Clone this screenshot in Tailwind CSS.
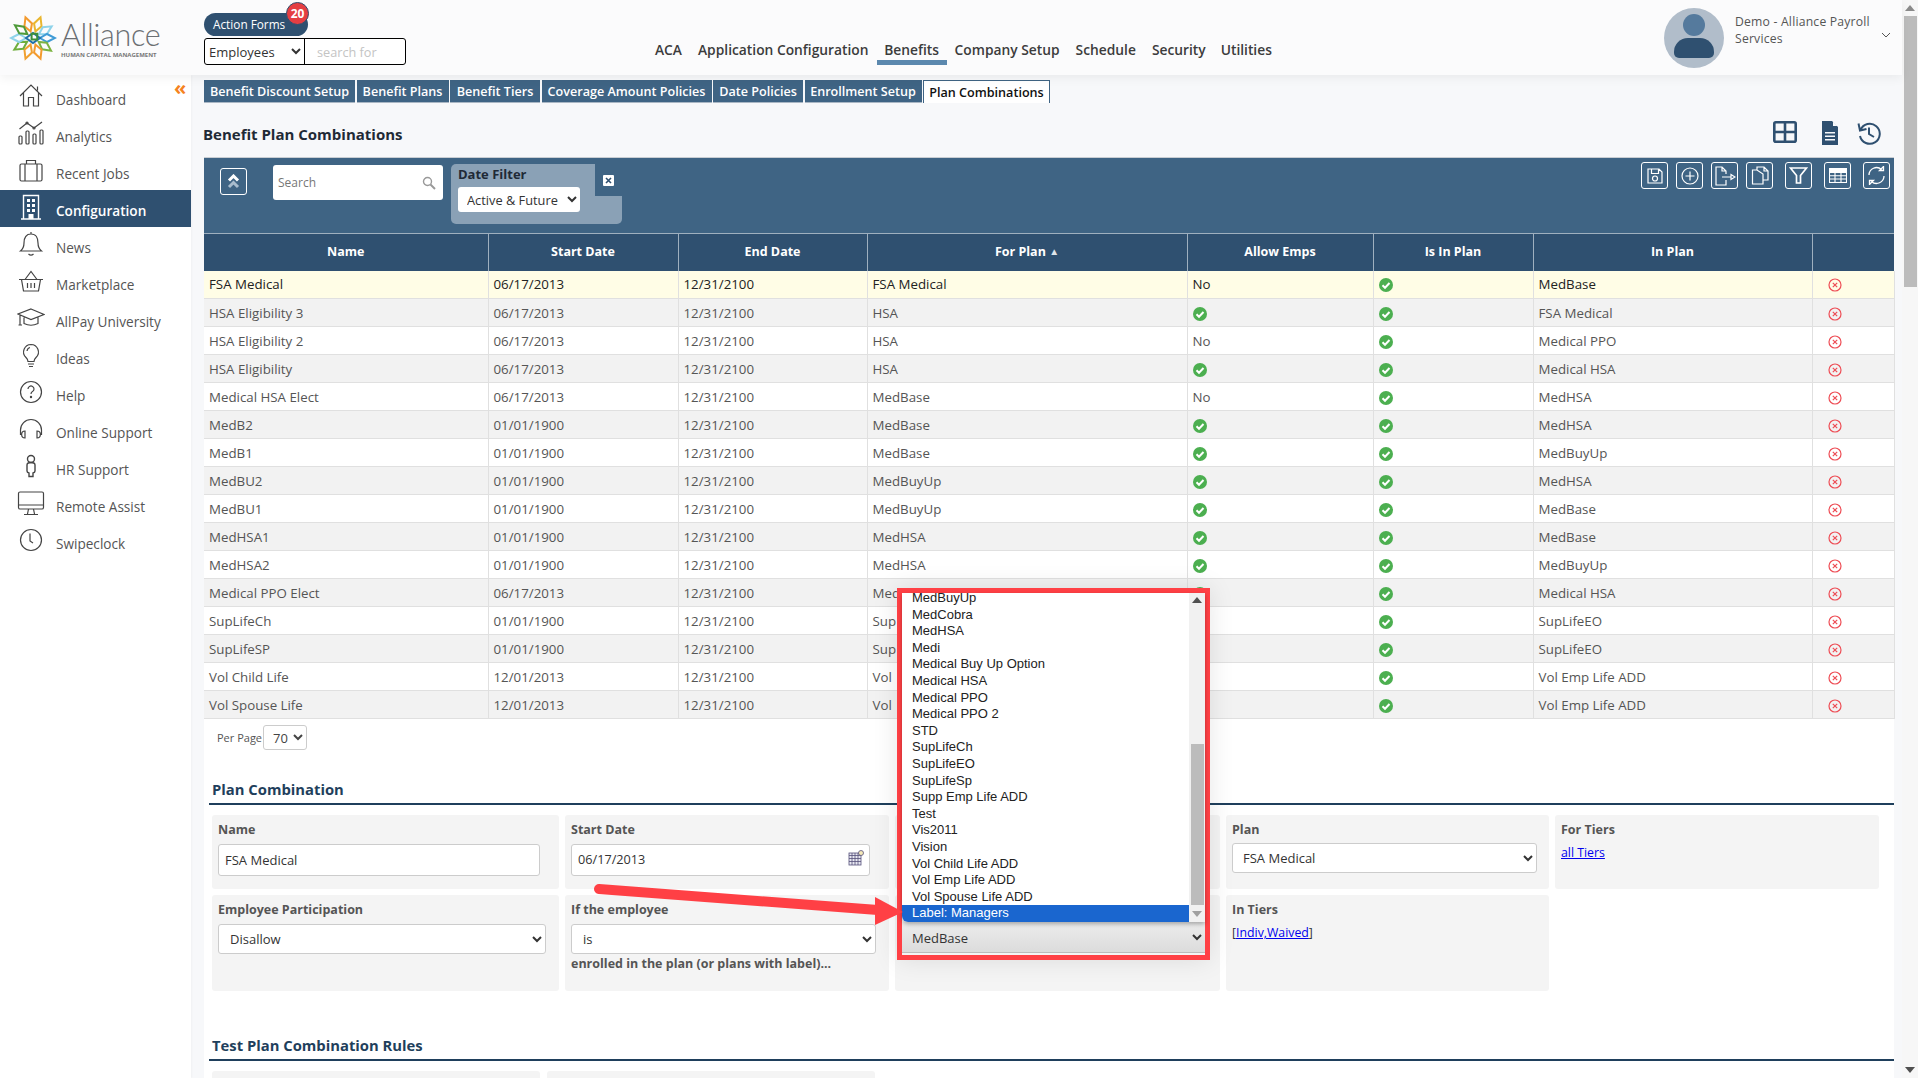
<!DOCTYPE html>
<html lang="en">
<head>
    <meta charset="UTF-8">
    <title>Benefit Plan Combinations</title>
    <script src="https://cdn.jsdelivr.net/npm/@tailwindcss/browser@4"></script>
</head>
<body class="bg-[#f7f8fa] overflow-hidden font-['Open_Sans',sans-serif]">
<div class="relative flex w-[1918px] h-[1078px] overflow-hidden">
    <div class="w-[1902px] flex flex-col">
        <!-- Header -->
        <header class="relative z-10 h-[75px] shrink-0 flex bg-[#fbfbfc] shadow-[0_3px_10px_rgba(0,0,0,0.06)]">
            <div class="w-[204px] shrink-0 flex items-center pl-[9px]">
                <svg class="w-[48px] h-[46px] shrink-0" viewBox="0 0 48 46" fill="none" stroke-width="2">
                    <g transform="translate(24 23)">
                        <polygon points="0,-7 4,-14 0,-22 -4,-14" stroke="#f39a2e" transform="rotate(-20)"/>
                        <polygon points="0,-7 4,-14 0,-22 -4,-14" stroke="#e9b62f" transform="rotate(20)"/>
                        <polygon points="0,-7 4,-14 0,-22 -4,-14" stroke="#8fd3ea" transform="rotate(58)"/>
                        <polygon points="0,-7 4,-14 0,-22 -4,-14" stroke="#3f9bd6" transform="rotate(90)"/>
                        <polygon points="0,-7 4,-14 0,-22 -4,-14" stroke="#7cb342" transform="rotate(125)"/>
                        <polygon points="0,-7 4,-14 0,-22 -4,-14" stroke="#f39a2e" transform="rotate(160)"/>
                        <polygon points="0,-7 4,-14 0,-22 -4,-14" stroke="#f0a030" transform="rotate(200)"/>
                        <polygon points="0,-7 4,-14 0,-22 -4,-14" stroke="#6fae3c" transform="rotate(238)"/>
                        <polygon points="0,-7 4,-14 0,-22 -4,-14" stroke="#8fd3ea" transform="rotate(270)"/>
                        <polygon points="0,-7 4,-14 0,-22 -4,-14" stroke="#4f9a3a" transform="rotate(305)"/>
                        <polygon points="-7,0 0,-5 7,0 0,5" stroke="#1f6fa8"/>
                        <polygon points="0,-6 4,-2 0,2 -4,-2" stroke="#3d8f3a" transform="rotate(45)"/>
                    </g>
                </svg>
                <div class="ml-[4px] w-[100px] mt-[2px]">
                    <div class="text-[30.5px] leading-[34px] font-light text-[#6b6f73] font-['Lato','Open_Sans',sans-serif] tracking-[-0.3px]">Alliance</div>
                    <div class="text-[6px] leading-[9px] font-bold text-[#777] whitespace-nowrap">HUMAN CAPITAL MANAGEMENT</div>
                </div>
            </div>
            <div class="w-[300px] shrink-0 pt-[13px] relative">
                <div class="relative w-[104px] h-[23px] rounded-full bg-[#2f5070] text-white text-[11.8px] leading-[23px] pl-[9px]">
                    Action Forms
                    <span class="absolute left-[82px] -top-[11px] w-[23px] h-[23px] rounded-full bg-[#e53e42] border border-[#2f5070] text-white text-[12px] font-bold leading-[21px] text-center">20</span>
                </div>
                <div class="mt-[2px] flex w-[202px] h-[27px] border border-black rounded-[3px] bg-white">
                    <select class="w-[100px] h-full text-[13px] text-[#333] border-r border-black"><option>Employees</option></select>
                    <input class="w-[100px] h-full text-[12.7px] pl-[12px] placeholder:text-[#c4c4c4]" placeholder="search for">
                </div>
            </div>
            <nav class="h-full flex items-start pt-[40px] pl-[151px] text-[13.8px] font-semibold text-[#3c3c3c] whitespace-nowrap">
                <span class="mr-[16px]">ACA</span>
                <span class="mr-[8px]">Application Configuration</span>
                <span class="w-[70px] h-[25px] mr-[8px] border-b-[5px] border-[#5b88ae] text-center">Benefits</span>
                <span class="mr-[16px]">Company Setup</span>
                <span class="mr-[16px]">Schedule</span>
                <span class="mr-[15px]">Security</span>
                <span>Utilities</span>
            </nav>
            <div class="ml-auto flex items-center pr-[11px]">
                <div class="relative w-[60px] h-[60px] rounded-full bg-[#b1bdca] overflow-hidden">
                    <div class="absolute left-[19px] top-[6px] w-[22px] h-[22px] rounded-full bg-[#557a9d]"></div>
                    <div class="absolute left-[10px] top-[30px] w-[40px] h-[20px] rounded-t-[14px] rounded-b-[5px] bg-[#2f5070]"></div>
                </div>
                <div class="ml-[11px] w-[140px] -mt-[16px] text-[12.2px] leading-[17px] text-[#555] tracking-[0.2px]">Demo - Alliance Payroll Services</div>
                <svg class="w-[10px] h-[6px] ml-[6px] -mt-[6px] text-[#555]" viewBox="0 0 10 6" fill="none" stroke="currentColor"><path d="M1 1l4 4 4-4"/></svg>
            </div>
        </header>

        <div class="flex flex-1 min-h-0">
            <!-- Sidebar -->
            <aside class="relative w-[191px] shrink-0 bg-white pt-[4px] text-[13.6px] text-[#555] shadow-[1px_0_2px_rgba(0,0,0,0.03)]">
                <span class="absolute left-[174px] top-[4px] text-[#f58220] text-[20px] leading-[18px] font-bold">«</span>
                <a class="h-[37px] flex items-center">
                    <svg class="w-[28px] h-[28px] ml-[17px] mr-[11px] -mt-[3px] text-[#444]" viewBox="0 0 28 28" fill="none" stroke="currentColor" stroke-width="1.2"><path d="M3 14L14 3l11 11M6.500 11v13H11.500V15.500h5V24H21.500V11M20.500 4.500v4"/></svg>
                    <span class="pt-[5px]">Dashboard</span>
                </a>
                <a class="h-[37px] flex items-center">
                    <svg class="w-[28px] h-[28px] ml-[17px] mr-[11px] -mt-[3px] text-[#444]" viewBox="0 0 28 28" fill="none" stroke="currentColor" stroke-width="1.2"><rect x="2" y="17" width="3" height="8" rx="1"/><rect x="9" y="12" width="3" height="13" rx="1"/><rect x="16" y="15" width="3" height="10" rx="1"/><rect x="23" y="11" width="3" height="14" rx="1"/><path d="M2.500 10l7.500-6 7 5 8-6"/><circle cx="10" cy="4" r="1"/><circle cx="17" cy="9" r="1"/></svg>
                    <span class="pt-[5px]">Analytics</span>
                </a>
                <a class="h-[37px] flex items-center">
                    <svg class="w-[28px] h-[28px] ml-[17px] mr-[11px] -mt-[3px] text-[#444]" viewBox="0 0 28 28" fill="none" stroke="currentColor" stroke-width="1.2"><rect x="3" y="8" width="22" height="17" rx="1.500"/><path d="M9.500 8V4.500h9V8M8 8v17M20 8v17"/></svg>
                    <span class="pt-[5px]">Recent Jobs</span>
                </a>
                <a class="h-[37px] flex items-center bg-[#2f5070] text-white font-semibold">
                    <svg class="w-[28px] h-[28px] ml-[17px] mr-[11px] -mt-[3px] text-white" viewBox="0 0 28 28" fill="none" stroke="currentColor" stroke-width="1.400"><path d="M4 26h20M6.500 26V2.500h15V26"/><path fill="currentColor" stroke="none" d="M10 6h3v3h-3zM15 6h3v3h-3zM10 11h3v3h-3zM15 11h3v3h-3zM10 16h3v3h-3zM15 16h3v3h-3zM11.500 21h5v5h-5z"/></svg>
                    <span class="pt-[5px]">Configuration</span>
                </a>
                <a class="h-[37px] flex items-center">
                    <svg class="w-[28px] h-[28px] ml-[17px] mr-[11px] -mt-[3px] text-[#444]" viewBox="0 0 28 28" fill="none" stroke="currentColor" stroke-width="1.2"><path d="M14 4c-5 0-7 4-7 9 0 4-1 6-3.500 8h21c-2.500-2-3.500-4-3.500-8 0-5-2-9-7-9zM14 4V2M11.500 24q2.500 2.500 5 0"/></svg>
                    <span class="pt-[5px]">News</span>
                </a>
                <a class="h-[37px] flex items-center">
                    <svg class="w-[28px] h-[28px] ml-[17px] mr-[11px] -mt-[3px] text-[#444]" viewBox="0 0 28 28" fill="none" stroke="currentColor" stroke-width="1.2"><path d="M2 12.500h24M4.500 12.500l2 11.500h15l2-11.500M8 12.500L14 4.500l6 8M10.500 16v5M14 16v5M17.500 16v5"/></svg>
                    <span class="pt-[5px]">Marketplace</span>
                </a>
                <a class="h-[37px] flex items-center">
                    <svg class="w-[28px] h-[28px] ml-[17px] mr-[11px] -mt-[3px] text-[#444]" viewBox="0 0 28 28" fill="none" stroke="currentColor" stroke-width="1.2"><path d="M14 5l13 5.500-13 5-13-5.500zM7 13.500v6q7 3.500 14 0v-6M3 11.500V21M5 21H1.500"/></svg>
                    <span class="pt-[5px]">AllPay University</span>
                </a>
                <a class="h-[37px] flex items-center">
                    <svg class="w-[28px] h-[28px] ml-[17px] mr-[11px] -mt-[3px] text-[#444]" viewBox="0 0 28 28" fill="none" stroke="currentColor" stroke-width="1.2"><path d="M14 3.500a7.500 7.500 0 0 0-5 13c1 1 2 3 2 4h6c0-1 1-3 2-4a7.500 7.500 0 0 0-5-13zM11 23h6M12 25.500h4M10 10q.5-3 3-3.500"/></svg>
                    <span class="pt-[5px]">Ideas</span>
                </a>
                <a class="h-[37px] flex items-center">
                    <svg class="w-[28px] h-[28px] ml-[17px] mr-[11px] -mt-[3px] text-[#444]" viewBox="0 0 28 28" fill="none" stroke="currentColor" stroke-width="1.2"><circle cx="14" cy="14" r="10.500"/><path d="M11 11a3 3 0 1 1 4.500 2.600c-1 .6-1.500 1.200-1.500 2.400"/><circle cx="14" cy="19" r=".6"/></svg>
                    <span class="pt-[5px]">Help</span>
                </a>
                <a class="h-[37px] flex items-center">
                    <svg class="w-[28px] h-[28px] ml-[17px] mr-[11px] -mt-[3px] text-[#444]" viewBox="0 0 28 28" fill="none" stroke="currentColor" stroke-width="1.2"><path d="M3.500 20v-5a10.500 10.500 0 0 1 21 0v5M8 16c-4.500 0-4.500 7 0 7zM20 16c4.500 0 4.500 7 0 7z"/></svg>
                    <span class="pt-[5px]">Online Support</span>
                </a>
                <a class="h-[37px] flex items-center">
                    <svg class="w-[28px] h-[28px] ml-[17px] mr-[11px] -mt-[3px] text-[#444]" viewBox="0 0 28 28" fill="none" stroke="currentColor" stroke-width="1.400"><circle cx="14" cy="7" r="3.500"/><path d="M10 13q0-2.500 4-2.500t4 2.500v6q0 1.500-2 2v3.500h-4V21q-2-.5-2-2z"/></svg>
                    <span class="pt-[5px]">HR Support</span>
                </a>
                <a class="h-[37px] flex items-center">
                    <svg class="w-[28px] h-[28px] ml-[17px] mr-[11px] -mt-[3px] text-[#444]" viewBox="0 0 28 28" fill="none" stroke="currentColor" stroke-width="1.2"><rect x="1.500" y="3" width="25" height="17" rx="1.500"/><path d="M1.500 16h25M11.500 20l-1 5M16.500 20l1 5M7 25.500h14"/></svg>
                    <span class="pt-[5px]">Remote Assist</span>
                </a>
                <a class="h-[37px] flex items-center">
                    <svg class="w-[28px] h-[28px] ml-[17px] mr-[11px] -mt-[3px] text-[#444]" viewBox="0 0 28 28" fill="none" stroke="currentColor" stroke-width="1.2"><circle cx="14" cy="14" r="10.500"/><path d="M13 7.500V15l3 2"/></svg>
                    <span class="pt-[5px]">Swipeclock</span>
                </a>
            </aside>

            <!-- Main -->
            <main class="flex-1 min-w-0 pl-[13px] pr-[8px] flex flex-col">
                <div class="mt-[5px] h-[23px] shrink-0 flex gap-[1.500px] text-[12.6px] font-semibold text-white whitespace-nowrap leading-[23px]">
                    <span class="w-[151px] text-center bg-[#3f6484] border-b border-[#aab7c4]">Benefit Discount Setup</span>
                    <span class="w-[92px] text-center bg-[#3f6484] border-b border-[#aab7c4]">Benefit Plans</span>
                    <span class="w-[90px] text-center bg-[#3f6484] border-b border-[#aab7c4]">Benefit Tiers</span>
                    <span class="w-[170px] text-center bg-[#3f6484] border-b border-[#aab7c4]">Coverage Amount Policies</span>
                    <span class="w-[90px] text-center bg-[#3f6484] border-b border-[#aab7c4]">Date Policies</span>
                    <span class="w-[117px] text-center bg-[#3f6484] border-b border-[#aab7c4]">Enrollment Setup</span>
                    <span class="w-[127px] text-center bg-white text-[#111] border-t border-r border-l border-[#3f6484]">Plan Combinations</span>
                </div>

                <div class="h-[54px] shrink-0 flex items-start">
                    <h1 class="mt-[21px] -ml-[1px] text-[15px] leading-[20px] font-bold text-[#1f2a36]">Benefit Plan Combinations</h1>
                    <div class="ml-auto mt-[18px] flex items-start text-[#2f5070] mr-[13px]">
                        <svg class="w-[24px] h-[22px] mr-[24px]" viewBox="0 0 24 22" fill="none" stroke="currentColor" stroke-width="2.600"><rect x="1.300" y="1.300" width="21.400" height="19.400" rx="1.500"/><path d="M12 1v20M1 11h22"/></svg>
                        <svg class="w-[18px] h-[24px] mr-[18px]" viewBox="0 0 18 24"><path fill="currentColor" d="M1 0h10l6 6v18H1z"/><path fill="#f7f8fa" d="M12 .5V5h4.500zM4 11h10v1.500H4zM4 14.500h10V16H4zM4 18h10v1.500H4z"/></svg>
                        <svg class="w-[24px] h-[24px]" viewBox="0 0 24 24" fill="none" stroke="currentColor" stroke-width="2"><path d="M3.500 9a10 10 0 1 1-.5 6M1.500 2.500L3 9.500l6.500-1.500"/><path d="M12 6.500V13l5 3"/></svg>
                    </div>
                </div>

                <!-- Grid toolbar -->
                <div class="h-[76px] shrink-0 flex items-start bg-[#3f6484] border-t border-[#c9ced3]">
                    <button class="ml-[16px] mt-[10px] w-[27px] h-[27px] border border-white rounded-[3px] flex items-center justify-center">
                        <svg class="w-[13px] h-[15px]" viewBox="0 0 13 15" fill="none" stroke-width="3"><path d="M2 6.500l4.500-4.500L11 6.500" stroke="#fff"/><path d="M2 13l4.500-4.500L11 13" stroke="#a9bccd"/></svg>
                    </button>
                    <div class="ml-[26px] mt-[7px] w-[170px] h-[35px] bg-white rounded-[3px] flex items-center pl-[5px] pr-[7px] text-[12px] text-[#777]">
                        Search
                        <svg class="ml-auto w-[14px] h-[14px] text-[#999]" viewBox="0 0 14 14" fill="none" stroke="currentColor" stroke-width="1.400"><circle cx="5.500" cy="5.500" r="4"/><path d="M8.500 8.500l4.500 4.500" stroke-width="2"/></svg>
                    </div>
                    <div class="relative ml-[8px] mt-[6px] w-[171px] h-[60px] bg-[#8aa1b6] rounded-[5px] pl-[7px] pt-[1px]">
                        <div class="text-[13px] leading-[19px] font-bold text-[#1f2a36]">Date Filter</div>
                        <select class="mt-[3px] w-[122px] h-[25px] bg-white rounded-[3px] text-[12.8px] text-[#333] pl-[5px]"><option>Active &amp; Future</option></select>
                        <div class="absolute right-0 top-0 w-[27px] h-[32px] bg-[#3f6484] flex items-center justify-center">
                            <svg class="w-[11px] h-[11px]" viewBox="0 0 11 11"><rect width="11" height="11" rx="1" fill="#fff"/><path d="M3 3l5 5M8 3l-5 5" stroke="#2f5070" stroke-width="1.600"/></svg>
                        </div>
                    </div>
                    <div class="ml-auto mt-[4px] mr-[4px] flex text-white">
                        <button class="w-[27px] h-[27px] mr-[8px] border border-white rounded-[3px] flex items-center justify-center"><svg class="w-[18px] h-[18px]" viewBox="0 0 18 18" fill="none" stroke="currentColor" stroke-width="1.200"><path d="M2 2h11l3 3v11H2zM5.500 2v4.500h7V2"/><circle cx="9" cy="11.500" r="2.500"/></svg></button>
                        <button class="w-[27px] h-[27px] mr-[8px] border border-white rounded-[3px] flex items-center justify-center"><svg class="w-[18px] h-[18px]" viewBox="0 0 18 18" fill="none" stroke="currentColor" stroke-width="1.200"><circle cx="9" cy="9" r="8"/><path d="M9 4.500v9M4.500 9h9"/></svg></button>
                        <button class="w-[27px] h-[27px] mr-[8px] border border-white rounded-[3px] flex items-center justify-center"><svg class="w-[22px] h-[20px]" viewBox="0 0 22 20" fill="none" stroke="currentColor" stroke-width="1.200"><path d="M12 8V5L8 1H2v18h10v-5M8 1v4h4M8 11h9"/><path d="M17 8.500l4 2.500-4 2.500z"/></svg></button>
                        <button class="w-[27px] h-[27px] mr-[12px] border border-white rounded-[3px] flex items-center justify-center"><svg class="w-[18px] h-[19px]" viewBox="0 0 18 19" fill="none" stroke="currentColor" stroke-width="1.200"><path d="M6 4V1h7l4 4v9h-5M6 4H1.500v14H12V8zM13 1v4h4"/></svg></button>
                        <button class="w-[27px] h-[27px] mr-[12px] border border-white rounded-[3px] flex items-center justify-center"><svg class="w-[19px] h-[19px]" viewBox="0 0 19 19" fill="none" stroke="currentColor" stroke-width="1.700"><path d="M1.500 2h16L11.500 9.500V17h-4V9.500z"/></svg></button>
                        <button class="w-[27px] h-[27px] mr-[12px] border border-white rounded-[3px] flex items-center justify-center"><svg class="w-[18px] h-[15px]" viewBox="0 0 18 15" fill="none" stroke="currentColor" stroke-width="1.100"><rect x=".5" y=".5" width="17" height="14"/><path d="M.5 4.500h17M.5 7.800h17M.5 11h17M6 .5v14M12 .5v14" /><path d="M.5 2.500h17" stroke-width="3"/></svg></button>
                        <button class="w-[27px] h-[27px] border border-white rounded-[3px] flex items-center justify-center"><svg class="w-[19px] h-[19px]" viewBox="0 0 19 19" fill="none" stroke="currentColor" stroke-width="1.300"><path d="M2 9a7.500 7.500 0 0 1 12.500-5.500M17 10a7.500 7.500 0 0 1-12.500 5.500"/><path d="M12.500 4.500h4v-4zM6.500 14.500h-4v4z"/></svg></button>
                    </div>
                </div>

                <!-- Grid -->
                <table class="w-[1690px] table-fixed border-collapse text-[13.3px] shrink-0">
                    <colgroup>
                        <col class="w-[284px]"><col class="w-[190px]"><col class="w-[189px]"><col class="w-[320px]"><col class="w-[186px]"><col class="w-[160px]"><col class="w-[279px]"><col class="w-[82px]">
                    </colgroup>
                    <thead>
                        <tr class="h-[37px] bg-[#2f5070] text-white text-[12.500px] font-bold">
                            <th class="border-t border-r border-[#9fb0bf]">Name</th>
                            <th class="border-t border-r border-[#9fb0bf]">Start Date</th>
                            <th class="border-t border-r border-[#9fb0bf]">End Date</th>
                            <th class="border-t border-r border-[#9fb0bf]">For Plan <span class="text-[10px] align-[1px] text-[#dfe5ea]">▲</span></th>
                            <th class="border-t border-r border-[#9fb0bf]">Allow Emps</th>
                            <th class="border-t border-r border-[#9fb0bf]">Is In Plan</th>
                            <th class="border-t border-r border-[#9fb0bf]">In Plan</th>
                            <th class="border-t border-[#9fb0bf]"></th>
                        </tr>
                    </thead>
                    <tbody id="rows"></tbody>
                </table>

                <!-- Lower forms -->
                <section class="flex-1 bg-white">
                    <div class="h-[52px] pl-[13px] pt-[6px] flex items-start">
                        <span class="text-[11px] leading-[26px] text-[#555]">Per Page</span>
                        <select class="w-[44px] h-[25px] ml-[1px] bg-white border border-[#ccc] rounded-[3px] text-[13px] text-[#444] pl-[5px]"><option>70</option></select>
                    </div>
                    <h2 class="ml-[8px] mt-[8px] text-[14.800px] leading-[20px] font-bold text-[#1f3f5c]">Plan Combination</h2>
                    <div class="ml-[5px] mt-[4px] h-[2px] bg-[#1f3f5c]"></div>
                    <div class="ml-[8px] mt-[10px] grid grid-cols-[347px_324px_325px_323px_324px] grid-rows-[74px_96px] gap-[6px] text-[12.500px]">
                        <div class="bg-[#f4f4f4] rounded-[3px] px-[6px] pt-[6px]">
                            <label class="block font-bold text-[#555] leading-[18px]">Name</label>
                            <input class="mt-[5px] block w-[322px] h-[32px] bg-white border border-[#ccc] rounded-[3px] pl-[6px] text-[13px] text-[#333]" value="FSA Medical">
                        </div>
                        <div class="bg-[#f4f4f4] rounded-[3px] px-[6px] pt-[6px]">
                            <label class="block font-bold text-[#555] leading-[18px]">Start Date</label>
                            <div class="mt-[5px] w-[299px] h-[32px] bg-white border border-[#ccc] rounded-[3px] pl-[6px] pr-[5px] flex items-center text-[12.7px] text-[#333]">
                                06/17/2013
                                <svg class="ml-auto -mt-[4px] w-[16px] h-[16px]" viewBox="0 0 16 16" fill="none" stroke="#55507a" stroke-width=".8"><rect x="1" y="3" width="12" height="12" fill="#e8e8f2"/><path d="M1 5.500h12M1 8.500h12M1 11.500h12M4 3v12M7 3v12M10 3v12"/><circle cx="13" cy="3" r="2.500" fill="#f5e9b8"/></svg>
                            </div>
                        </div>
                        <div class="bg-[#f4f4f4] rounded-[3px]"></div>
                        <div class="bg-[#f4f4f4] rounded-[3px] px-[6px] pt-[6px]">
                            <label class="block font-bold text-[#555] leading-[18px]">Plan</label>
                            <select class="mt-[4px] block w-[305px] h-[30px] bg-white border border-[#ccc] rounded-[3px] pl-[6px] text-[13px] text-[#333]"><option>FSA Medical</option></select>
                        </div>
                        <div class="bg-[#f4f4f4] rounded-[3px] px-[6px] pt-[6px]">
                            <label class="block font-bold text-[#555] leading-[18px]">For Tiers</label>
                            <a class="block mt-[5px] text-[12.3px] text-[#0000ee] underline">all Tiers</a>
                        </div>
                        <div class="bg-[#f4f4f4] rounded-[3px] px-[6px] pt-[6px]">
                            <label class="block font-bold text-[#555] leading-[18px]">Employee Participation</label>
                            <select class="mt-[5px] block w-[328px] h-[30px] bg-white border border-[#ccc] rounded-[3px] pl-[7px] text-[13px] text-[#333]"><option>Disallow</option></select>
                        </div>
                        <div class="bg-[#f4f4f4] rounded-[3px] px-[6px] pt-[6px]">
                            <label class="block font-bold text-[#555] leading-[18px]">If the employee</label>
                            <select class="mt-[5px] block w-[305px] h-[30px] bg-white border border-[#ccc] rounded-[3px] pl-[7px] text-[13px] text-[#333]"><option>is</option></select>
                            <p class="mt-[1px] font-bold text-[#555] leading-[18px] whitespace-nowrap">enrolled in the plan (or plans with label)...</p>
                        </div>
                        <div class="bg-[#f4f4f4] rounded-[3px]"></div>
                        <div class="bg-[#f4f4f4] rounded-[3px] px-[6px] pt-[6px]">
                            <label class="block font-bold text-[#555] leading-[18px]">In Tiers</label>
                            <div class="mt-[5px] text-[12.3px] text-[#333]">[<a class="text-[#0000ee] underline">Indiv,Waived</a>]</div>
                        </div>
                    </div>
                    <h2 class="ml-[8px] mt-[44px] text-[14.800px] leading-[20px] font-bold text-[#1f3f5c]">Test Plan Combination Rules</h2>
                    <div class="ml-[5px] mt-[4px] h-[2px] bg-[#1f3f5c]"></div>
                    <div class="ml-[8px] mt-[10px] flex gap-[7px]">
                        <div class="w-[328px] h-[40px] bg-[#f4f4f4] rounded-[3px]"></div>
                        <div class="w-[328px] h-[40px] bg-[#f4f4f4] rounded-[3px]"></div>
                    </div>
                </section>
            </main>
        </div>
    </div>

    <!-- Page scrollbar -->
    <div class="relative w-[16px] bg-[#f7f7f7]">
        <div class="absolute left-[2px] top-[16px] w-[13px] h-[271px] bg-[#bcbcbc]"></div>
        <svg class="absolute left-[3px] top-[5px] w-[10px] h-[6px]" viewBox="0 0 10 6"><path fill="#8a8a8a" d="M5 0l5 6H0z"/></svg>
        <svg class="absolute left-[3px] top-[1067px] w-[10px] h-[6px]" viewBox="0 0 10 6"><path fill="#505050" d="M5 6l5-6H0z"/></svg>
    </div>

    <!-- Open dropdown, highlighted in red -->
    <div class="absolute left-[897px] top-[588px] w-[313px] h-[372px] border-[5px] border-[#ff4045] bg-[#f4f4f4] shadow-[0_0_24px_rgba(0,0,0,0.1)] z-20">
        <div class="relative h-[329px] bg-white overflow-hidden font-['Liberation_Sans',sans-serif] text-[13px] text-[#222] rounded-bl-[6px] shadow-[0_2px_4px_rgba(0,0,0,0.3)]">
            <ul class="-mt-[3px]">
                <li class="h-[16.600px] leading-[16.600px] pl-[10px]">MedBuyUp</li>
                <li class="h-[16.600px] leading-[16.600px] pl-[10px]">MedCobra</li>
                <li class="h-[16.600px] leading-[16.600px] pl-[10px]">MedHSA</li>
                <li class="h-[16.600px] leading-[16.600px] pl-[10px]">Medi</li>
                <li class="h-[16.600px] leading-[16.600px] pl-[10px]">Medical Buy Up Option</li>
                <li class="h-[16.600px] leading-[16.600px] pl-[10px]">Medical HSA</li>
                <li class="h-[16.600px] leading-[16.600px] pl-[10px]">Medical PPO</li>
                <li class="h-[16.600px] leading-[16.600px] pl-[10px]">Medical PPO 2</li>
                <li class="h-[16.600px] leading-[16.600px] pl-[10px]">STD</li>
                <li class="h-[16.600px] leading-[16.600px] pl-[10px]">SupLifeCh</li>
                <li class="h-[16.600px] leading-[16.600px] pl-[10px]">SupLifeEO</li>
                <li class="h-[16.600px] leading-[16.600px] pl-[10px]">SupLifeSp</li>
                <li class="h-[16.600px] leading-[16.600px] pl-[10px]">Supp Emp Life ADD</li>
                <li class="h-[16.600px] leading-[16.600px] pl-[10px]">Test</li>
                <li class="h-[16.600px] leading-[16.600px] pl-[10px]">Vis2011</li>
                <li class="h-[16.600px] leading-[16.600px] pl-[10px]">Vision</li>
                <li class="h-[16.600px] leading-[16.600px] pl-[10px]">Vol Child Life ADD</li>
                <li class="h-[16.600px] leading-[16.600px] pl-[10px]">Vol Emp Life ADD</li>
                <li class="h-[16.600px] leading-[16.600px] pl-[10px]">Vol Spouse Life ADD</li>
                <li class="h-[18px] leading-[15px] pl-[10px] bg-[#1a66cf] text-white">Label: Managers</li>
            </ul>
            <div class="absolute right-0 top-0 bottom-0 w-[16px] bg-[#f1f1f1]">
                <div class="absolute left-[2px] top-[151px] w-[13px] h-[161px] bg-[#bcbcbc]"></div>
                <svg class="absolute left-[3px] top-[4px] w-[10px] h-[6px]" viewBox="0 0 10 6"><path fill="#505050" d="M5 0l5 6H0z"/></svg>
                <svg class="absolute left-[3px] top-[318px] w-[10px] h-[6px]" viewBox="0 0 10 6"><path fill="#a0a0a0" d="M5 6l5-6H0z"/></svg>
            </div>
        </div>
        <select class="block w-[303px] h-[31px] pt-[2px] bg-gradient-to-b from-[#ececec] to-[#dcdcdc] border-b border-[#bbb] pl-[6px] text-[13px] text-[#333]"><option>MedBase</option></select>
    </div>

    <!-- Callout arrow -->
    <svg class="absolute left-[590px] top-[880px] w-[320px] h-[50px] z-30" viewBox="0 0 320 50">
        <path d="M9 9L288 30" stroke="#ff4045" stroke-width="10" stroke-linecap="round"/>
        <path d="M285 17L313 32 285 45z" fill="#ff4045"/>
    </svg>
</div>

<script>
    // rows of the plan combination grid
    const rows = [
        ['FSA Medical', '06/17/2013', '12/31/2100', 'FSA Medical', 'No', 'MedBase'],
        ['HSA Eligibility 3', '06/17/2013', '12/31/2100', 'HSA', '', 'FSA Medical'],
        ['HSA Eligibility 2', '06/17/2013', '12/31/2100', 'HSA', 'No', 'Medical PPO'],
        ['HSA Eligibility', '06/17/2013', '12/31/2100', 'HSA', '', 'Medical HSA'],
        ['Medical HSA Elect', '06/17/2013', '12/31/2100', 'MedBase', 'No', 'MedHSA'],
        ['MedB2', '01/01/1900', '12/31/2100', 'MedBase', '', 'MedHSA'],
        ['MedB1', '01/01/1900', '12/31/2100', 'MedBase', '', 'MedBuyUp'],
        ['MedBU2', '01/01/1900', '12/31/2100', 'MedBuyUp', '', 'MedHSA'],
        ['MedBU1', '01/01/1900', '12/31/2100', 'MedBuyUp', '', 'MedBase'],
        ['MedHSA1', '01/01/1900', '12/31/2100', 'MedHSA', '', 'MedBase'],
        ['MedHSA2', '01/01/1900', '12/31/2100', 'MedHSA', '', 'MedBuyUp'],
        ['Medical PPO Elect', '06/17/2013', '12/31/2100', 'Med', '', 'Medical HSA'],
        ['SupLifeCh', '01/01/1900', '12/31/2100', 'Sup', '', 'SupLifeEO'],
        ['SupLifeSP', '01/01/1900', '12/31/2100', 'Sup', '', 'SupLifeEO'],
        ['Vol Child Life', '12/01/2013', '12/31/2100', 'Vol', '', 'Vol Emp Life ADD'],
        ['Vol Spouse Life', '12/01/2013', '12/31/2100', 'Vol', '', 'Vol Emp Life ADD']
    ];
    const check = '<svg class="w-[14px] h-[14px]" viewBox="0 0 14 14"><circle cx="7" cy="7" r="7" fill="#4caf50"/><path d="M3.500 7.200l2.500 2.500 4.500-4.700" fill="none" stroke="#fff" stroke-width="2"/></svg>';
    const cross = '<svg class="w-[14px] h-[14px] ml-[10px]" viewBox="0 0 14 14" fill="none" stroke="#ee4d55" stroke-width="1.200"><circle cx="7" cy="7" r="6"/><path d="M4.800 4.800l4.400 4.400M9.200 4.800l-4.400 4.400"/></svg>';
    const td = 'px-[5px] pt-[2px] border-r border-b border-[#e0e0e0] whitespace-nowrap overflow-hidden';
    document.getElementById('rows').innerHTML = rows.map((r, i) => {
        const bg = i === 0 ? 'bg-[#fffde6] text-[#222]' : i % 2 ? 'bg-[#f2f2f2] text-[#555]' : 'bg-white text-[#555]';
        return `<tr class="h-[28px] ${bg}">
            <td class="${td}">${r[0]}</td>
            <td class="${td}">${r[1]}</td>
            <td class="${td}">${r[2]}</td>
            <td class="${td}">${r[3]}</td>
            <td class="${td}">${r[4] || check}</td>
            <td class="${td}">${check}</td>
            <td class="${td}">${r[5]}</td>
            <td class="${td}">${cross}</td>
        </tr>`;
    }).join('');
</script>
</body>
</html>
